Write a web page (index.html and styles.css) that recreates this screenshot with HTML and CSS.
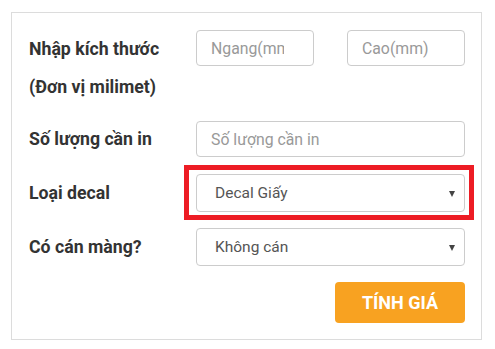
FILE: index.html
```html
<!DOCTYPE html>
<html lang="vi">
<head>
<meta charset="utf-8">
<title>Tính giá decal</title>
<link rel="stylesheet" href="styles.css">
</head>
<body>
<form class="panel">
  <div class="row row-size">
    <div class="label">Nhập kích thước<br>(Đơn vị milimet)</div>
    <div class="controls pair">
      <input class="field" type="text" placeholder="Ngang(mm)">
      <input class="field" type="text" placeholder="Cao(mm)">
    </div>
  </div>
  <div class="row row-qty">
    <div class="label">Số lượng cần in</div>
    <div class="controls">
      <input class="field wide" type="text" placeholder="Số lượng cần in">
    </div>
  </div>
  <div class="row row-type">
    <div class="label">Loại decal</div>
    <div class="controls highlight">
      <div class="select">Decal Giấy<span class="caret"></span></div>
      <div class="mark"></div>
    </div>
  </div>
  <div class="row row-lam">
    <div class="label">Có cán màng?</div>
    <div class="controls">
      <div class="select">Không cán<span class="caret"></span></div>
    </div>
  </div>
  <div class="actions">
    <button class="btn" type="button">TÍNH GIÁ</button>
  </div>
</form>
</body>
</html>
```
FILE: styles.css
```css
html, body {
  margin: 0;
  padding: 0;
  background: #fff;
}
body {
  font-family: Roboto, "Liberation Sans", Arial, sans-serif;
}
.panel {
  box-sizing: border-box;
  width: 471px;
  height: 328px;
  margin: 12px 0 0 11px;
  border: 1px solid #dcdcdc;
  padding: 17px 16px 16px 17px;
}
.row {
  display: flex;
  align-items: center;
}
.label {
  width: 167px;
  flex: none;
  font-size: 17.7px;
  font-weight: 700;
  color: #333;
  line-height: 36px;
}
.controls {
  flex: 1;
  position: relative;
}
.pair {
  display: flex;
  gap: 33px;
  align-self: flex-start;
}
.row-size {
  align-items: flex-start;
  margin-bottom: 15px;
}
.row-size .label {
  line-height: 38px;
}
.row-qty { margin-bottom: 17px; }
.row-type { margin-bottom: 16px; }
.row-lam { margin-bottom: 16px; }
.field {
  box-sizing: border-box;
  width: 118px;
  height: 36px;
  border: 1px solid #ccc;
  border-radius: 4px;
  padding: 0 29px 0 14px;
  font-family: inherit;
  font-size: 15.8px;
  color: #555;
  outline: none;
  margin: 0;
}
.field::placeholder {
  color: #999;
}
.field.wide {
  width: 100%;
  padding-right: 14px;
}
.select {
  box-sizing: border-box;
  height: 38px;
  border: 1px solid #ccc;
  border-radius: 4px;
  padding: 0 18px;
  font-size: 15.5px;
  color: #555;
  line-height: 36px;
  position: relative;
}
.caret {
  position: absolute;
  right: 9px;
  top: 16px;
  width: 0;
  height: 0;
  border-left: 3px solid transparent;
  border-right: 3px solid transparent;
  border-top: 6px solid #444;
}
.mark {
  position: absolute;
  top: -9px;
  left: -12px;
  right: -9px;
  bottom: -8px;
  border: 5px solid #ed1c24;
  pointer-events: none;
}
.actions {
  display: flex;
  justify-content: flex-end;
}
.btn {
  width: 130px;
  height: 41px;
  border: 0;
  border-radius: 4px;
  background: #f8a221;
  color: #fff;
  font-family: inherit;
  font-size: 18px;
  font-weight: 700;
  padding: 0;
  cursor: pointer;
}
```
